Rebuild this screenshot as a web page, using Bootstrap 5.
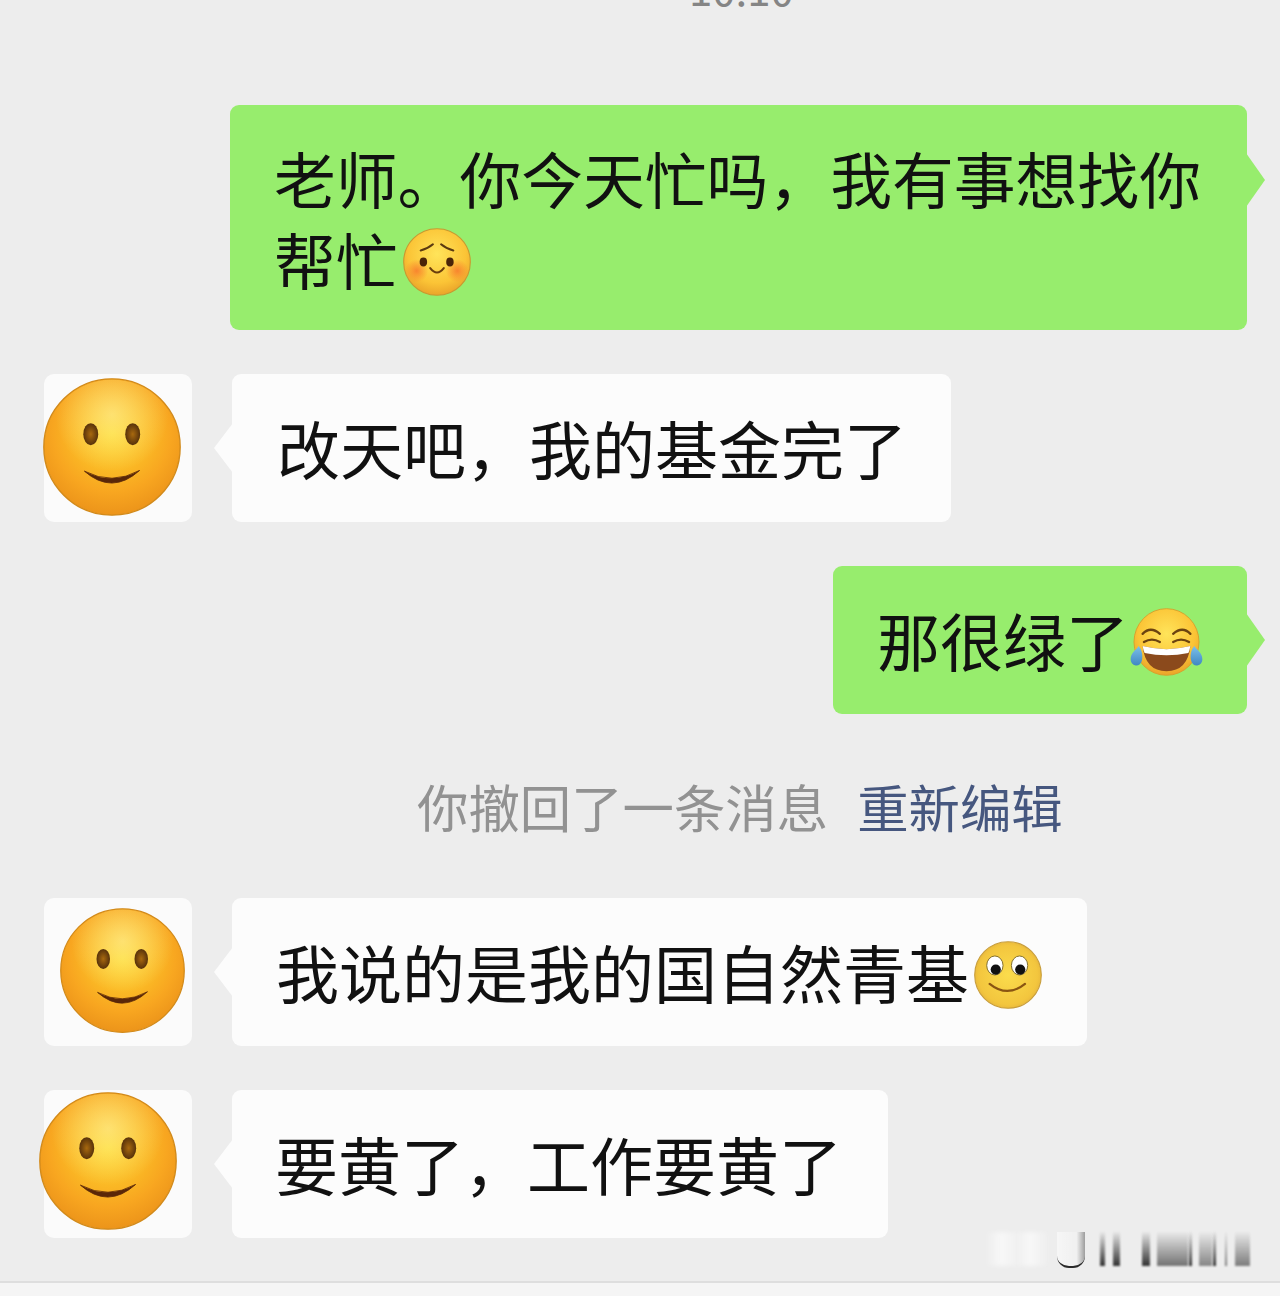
<!DOCTYPE html>
<html lang="zh">
<head>
<meta charset="utf-8">
<title>聊天记录</title>
<link href="https://cdn.jsdelivr.net/npm/bootstrap@5.3.0/dist/css/bootstrap.min.css" rel="stylesheet">
<style>
html,body{margin:0;background:#ededed}
body{font-family:"Noto Sans CJK SC","Liberation Sans",sans-serif;color:#111}
.chat-page{width:1280px;height:1296px;position:relative;overflow:hidden;background:#ededed}
.time-strip{height:8px;padding-left:689px;margin-bottom:97px;color:#858585;font-size:42px;line-height:42px}
.time-strip span{display:block;margin-top:-33px}
.chat-row{margin-bottom:44px;padding-left:44px;padding-right:33px}
.avatar-box{width:148px;height:148px;background:#fbfbfb;border-radius:10px;position:relative;flex:none;margin-right:40px}
.avatar-face{position:absolute;display:block}
.face-a{left:-1px;top:4px;width:138px;height:138px}
.face-b{left:16px;top:10px;width:125px;height:125px}
.face-c{left:-5px;top:2px;width:138px;height:138px}
.bubble{position:relative;font-size:63px;line-height:81px;border-radius:9px;padding:32px 0 35px 45px;flex:none;white-space:nowrap}
.bubble-in{background:#fcfcfc}
.bubble-in::before{content:"";position:absolute;left:-18px;top:49px;width:19px;height:50px;background:#fcfcfc;clip-path:polygon(100% 0,0 50%,100% 100%)}
.bubble-out{background:#97ed6d}
.bubble-out::after{content:"";position:absolute;right:-18px;top:47px;width:19px;height:54px;background:#97ed6d;clip-path:polygon(0 0,100% 50%,0 100%)}
.bubble-long{width:1017px;height:225px;white-space:normal;padding-left:44px;font-size:61.8px}
.bubble-long::after{top:48px}
.w-gaiti{width:719px;height:148px}
.w-lv{width:414px;height:148px;padding-left:44px}
.w-guo{width:855px;height:148px;padding-left:44px}
.w-huang{width:656px;height:148px;padding-left:43px}
.inline-emoji{display:inline-block;vertical-align:-11px;width:68px;height:68px;margin-left:5px}
.emoji-laugh{width:73px;height:68px;margin-left:1px;vertical-align:-10px}
.sys-line{height:60px;margin-top:62px;margin-bottom:62px;padding-left:417px;font-size:51.4px;line-height:60px;color:#929292;white-space:nowrap}
.sys-link{color:#46577f;margin-left:29px}
.chat-foot{position:absolute;left:0;right:0;top:1281px;height:15px;background:#f5f5f5;border-top:2px solid #dedede}
.wm{position:absolute;left:0;top:0;width:1280px;height:1296px;pointer-events:none}
.wm-bar{position:absolute;top:1232px;height:34px;filter:blur(1.2px);background:linear-gradient(to bottom,rgba(60,60,60,.03),rgba(30,30,30,.9))}
.wm-faint{position:absolute;top:1232px;height:34px;background:linear-gradient(to right,rgba(255,255,255,0),rgba(255,255,255,.6) 25%,rgba(255,255,255,.2) 50%,rgba(255,255,255,.6) 70%,rgba(255,255,255,0));filter:blur(2px);left:985px;width:65px}
.wm-cup{position:absolute;left:1057px;top:1232px;width:28px;height:36px;border:solid #2a2a2a;border-width:0 0 2px;border-radius:0 0 12px 12px;background:linear-gradient(to right,rgba(255,255,255,.5),rgba(255,255,255,.2) 70%,rgba(60,60,60,.45));filter:blur(.5px)}
.b1{left:1100px;width:5px}.b2{left:1113px;width:7px}.b3{left:1142px;width:8px}
.b4{left:1157px;width:31px;opacity:.65}.b5{left:1189px;width:3px}.b6{left:1199px;width:13px;opacity:.55}
.b7{left:1213px;width:3px}.b8{left:1225px;width:2px;opacity:.6}.b9{left:1235px;width:15px;opacity:.6}
.svg-defs{position:absolute;width:0;height:0}
</style>
</head>
<body>
<svg class="svg-defs" aria-hidden="true">
  <defs>
    <radialGradient id="gFace" cx="50%" cy="40%" r="60%">
      <stop offset="0" stop-color="#fddb2c"/><stop offset=".3" stop-color="#fcc428"/><stop offset=".72" stop-color="#f8a620"/><stop offset="1" stop-color="#ec941a"/>
    </radialGradient>
    <radialGradient id="gTop" cx="50%" cy="26%" r="42%">
      <stop offset="0" stop-color="#fff1a0" stop-opacity=".6"/><stop offset="1" stop-color="#fff1a0" stop-opacity="0"/>
    </radialGradient>
    <radialGradient id="gEye" cx="50%" cy="50%" r="55%">
      <stop offset="0" stop-color="#a8690f"/><stop offset="1" stop-color="#4f2c0a"/>
    </radialGradient>
    <radialGradient id="gShy" cx="50%" cy="38%" r="62%">
      <stop offset="0" stop-color="#ffe45a"/><stop offset=".7" stop-color="#fbc436"/><stop offset="1" stop-color="#eaa42a"/>
    </radialGradient>
    <radialGradient id="gBlush" cx="50%" cy="50%" r="50%">
      <stop offset="0" stop-color="#f8822e" stop-opacity=".95"/><stop offset="1" stop-color="#f8822e" stop-opacity="0"/>
    </radialGradient>
    <radialGradient id="gRoll" cx="50%" cy="50%" r="55%">
      <stop offset="0" stop-color="#fbdc4c"/><stop offset=".8" stop-color="#f3c63e"/><stop offset="1" stop-color="#e4b23a"/>
    </radialGradient>
    <linearGradient id="gTear" x1="0" y1="0" x2="0" y2="1">
      <stop offset="0" stop-color="#7cc0ea"/><stop offset="1" stop-color="#3f87c2"/>
    </linearGradient>
    <symbol id="smile" viewBox="0 0 100 100">
      <circle cx="50" cy="50" r="49.4" fill="url(#gFace)" stroke="#d28a1a" stroke-width="1"/>
      <circle cx="50" cy="50" r="48.8" fill="url(#gTop)"/>
      <ellipse cx="34.6" cy="40.7" rx="5.4" ry="8" fill="url(#gEye)"/>
      <ellipse cx="65" cy="40.7" rx="5.4" ry="8" fill="url(#gEye)"/>
      <path d="M30 67.5Q50 78 70 67Q50 85 30 67.5Z" fill="#5a2708" stroke="#5a2708" stroke-width=".6"/>
    </symbol>
  </defs>
</svg>

<main class="chat-page">
  <div class="time-strip overflow-hidden"><span>10:10</span></div>

  <section class="chat-row d-flex justify-content-end">
    <div class="bubble bubble-out bubble-long">老师。你今天忙吗，我有事想找你帮忙<svg class="inline-emoji" viewBox="0 0 100 100" aria-hidden="true">
      <circle cx="50" cy="50" r="49" fill="url(#gShy)" stroke="#c9982f" stroke-width="1.6"/>
      <circle cx="20" cy="63" r="17" fill="url(#gBlush)"/><circle cx="80" cy="63" r="17" fill="url(#gBlush)"/>
      <path d="M26 33Q37 30 44 24M74 33Q63 30 56 24" fill="none" stroke="#5b3a10" stroke-width="3" stroke-linecap="round"/>
      <ellipse cx="30" cy="50" rx="5.5" ry="6.5" fill="#4a2408"/><ellipse cx="69" cy="50" rx="5.5" ry="6.5" fill="#4a2408"/>
      <path d="M40 59Q50 72 60 59" fill="none" stroke="#6a3d0c" stroke-width="3" stroke-linecap="round"/>
    </svg></div>
  </section>

  <section class="chat-row d-flex">
    <div class="avatar-box"><svg class="avatar-face face-a" aria-hidden="true"><use href="#smile"/></svg></div>
    <div class="bubble bubble-in w-gaiti">改天吧，我的基金完了</div>
  </section>

  <section class="d-flex justify-content-end chat-row mb-0">
    <div class="bubble bubble-out w-lv">那很绿了<svg class="inline-emoji emoji-laugh" viewBox="-5 0 110 100" preserveAspectRatio="none" aria-hidden="true">
      <circle cx="50" cy="50" r="49" fill="url(#gShy)" stroke="#d7a02c" stroke-width="1.4"/>
      <path d="M14 38Q26 26 40 38M60 38Q74 26 86 38" fill="none" stroke="#6b4310" stroke-width="3.5" stroke-linecap="round"/>
      <path d="M16 50Q28 43 40 50M60 50Q72 43 84 50" fill="none" stroke="#6b4310" stroke-width="3.5" stroke-linecap="round"/>
      <path d="M14 56Q50 65 86 56Q82 93 50 93Q18 93 14 56Z" fill="#8b4a1c"/>
      <path d="M14 56Q50 65 86 56Q85 62 83 66Q50 73 17 66Q15 62 14 56Z" fill="#fff"/>
      <path d="M8 56C4 62-4 66-4 75A8.5 8.5 0 0 0 13 77C15 69 12 60 8 56Z" fill="url(#gTear)"/>
      <path d="M92 56C96 62 104 66 104 75A8.5 8.5 0 0 1 87 77C85 69 88 60 92 56Z" fill="url(#gTear)"/>
    </svg></div>
  </section>

  <div class="sys-line">你撤回了一条消息<span class="sys-link">重新编辑</span></div>

  <section class="chat-row d-flex">
    <div class="avatar-box"><svg class="avatar-face face-b" aria-hidden="true"><use href="#smile"/></svg></div>
    <div class="bubble bubble-in w-guo">我说的是我的国自然青基<svg class="inline-emoji" viewBox="0 0 100 100" aria-hidden="true">
      <circle cx="50" cy="50" r="49" fill="url(#gRoll)" stroke="#c79d3c" stroke-width="1.6"/>
      <ellipse cx="30.7" cy="36" rx="12" ry="14" fill="#fff" stroke="#7d6a2a" stroke-width="1.4"/>
      <ellipse cx="67" cy="36" rx="12" ry="14" fill="#fff" stroke="#7d6a2a" stroke-width="1.4"/>
      <circle cx="32" cy="42" r="7.5" fill="#111"/><circle cx="68" cy="42" r="7.5" fill="#111"/>
      <path d="M23 63Q49 84 75 63" fill="none" stroke="#8a5512" stroke-width="3.2" stroke-linecap="round"/>
    </svg></div>
  </section>

  <section class="chat-row d-flex">
    <div class="avatar-box"><svg class="avatar-face face-c" aria-hidden="true"><use href="#smile"/></svg></div>
    <div class="bubble bubble-in w-huang">要黄了，工作要黄了</div>
  </section>

  <div class="chat-foot"></div>

  <div class="wm" aria-hidden="true">
    <div class="wm-faint"></div>
    <div class="wm-cup"></div>
    <div class="wm-bar b1"></div><div class="wm-bar b2"></div><div class="wm-bar b3"></div>
    <div class="wm-bar b4"></div><div class="wm-bar b5"></div><div class="wm-bar b6"></div>
    <div class="wm-bar b7"></div><div class="wm-bar b8"></div><div class="wm-bar b9"></div>
  </div>
</main>
<script src="https://cdn.jsdelivr.net/npm/bootstrap@5.3.0/dist/js/bootstrap.bundle.min.js"></script>
</body>
</html>
